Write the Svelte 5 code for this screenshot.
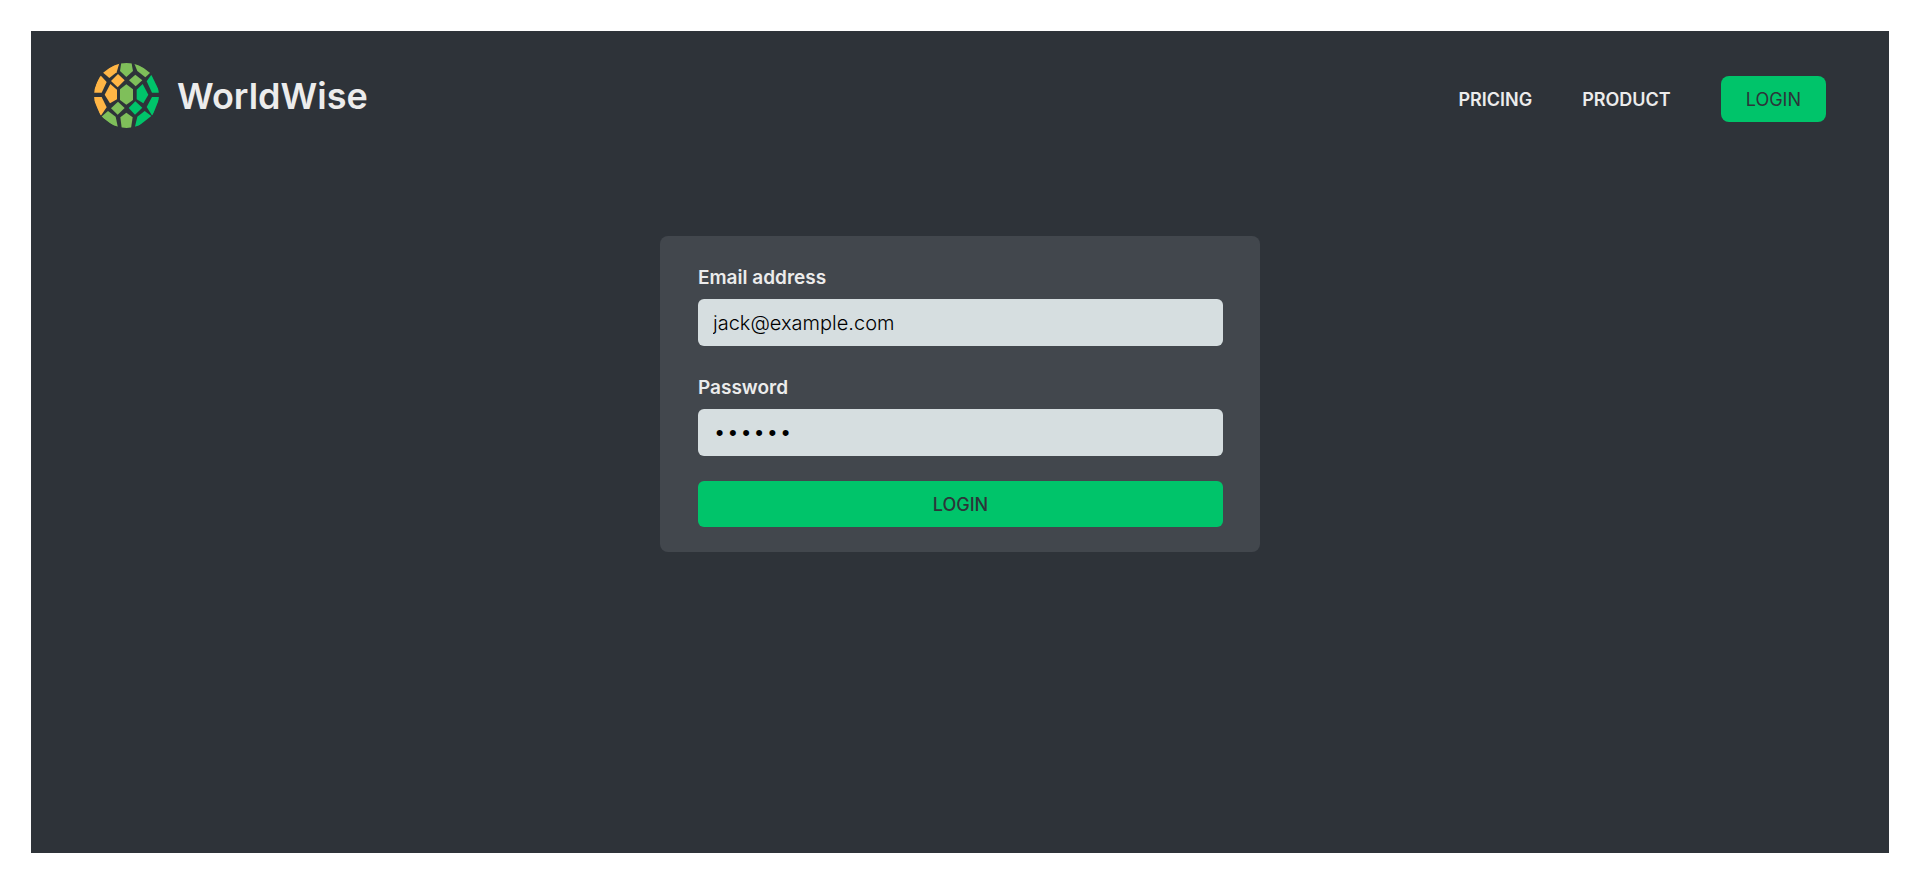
<script>
  let email = $state('jack@example.com');
  let password = $state('qwerty');

  const orange = '#ffb545';
  const lime = '#7fbf5a';
  const green = '#00c46a';

  const facets = [
    [lime, '365,180 393,180 399,213 379,231 360,213'],
    [lime, '361,352 379,338 398,352 392,392 366,392'],
    [lime, '379,253 399,268 399,300 379,314 360,300 360,268'],
    [orange, '359,186 350,217 328,234 306,215'],
    [lime, '401,186 412,213 436,232 454,215'],
    [orange, '354,222 374,241 353,262 333,243'],
    [lime, '406,224 427,241 407,259 387,241'],
    [orange, '300,224 320,246 305,278 278,278'],
    [orange, '278,291 305,291 320,322 302,348'],
    [orange, '331,252 351,269 351,298 330,310 314,284'],
    [green, '454,224 480,278 456,278 440,244'],
    [green, '480,291 456,291 440,321 457,348'],
    [green, '428,252 445,284 430,310 410,298 410,269'],
    [lime, '354,305 374,324 353,344 333,325'],
    [green, '406,304 427,323 405,344 386,324'],
    [lime, '324,333 347,350 355,388 304,350'],
    [green, '434,333 454,348 403,388 412,350']
  ];
</script>

<main>
  <header>
    <a class="logo" href="#home">
      <svg viewBox="282 189 195 195" aria-hidden="true">
        <clipPath id="globe"><circle cx="379.5" cy="286.5" r="97.5" /></clipPath>
        <g clip-path="url(#globe)">
          {#each facets as [fill, points]}
            <polygon {fill} {points} />
          {/each}
        </g>
      </svg>
      <span>WorldWise</span>
    </a>
    <nav>
      <a href="#pricing">PRICING</a>
      <a href="#product">PRODUCT</a>
      <a class="cta" href="#login">LOGIN</a>
    </nav>
  </header>

  <form onsubmit={(e) => e.preventDefault()}>
    <div class="field">
      <label for="email">Email address</label>
      <input id="email" type="email" bind:value={email} />
    </div>
    <div class="field">
      <label for="password">Password</label>
      <input id="password" type="password" bind:value={password} />
    </div>
    <button type="submit">LOGIN</button>
  </form>
</main>

<style>
  :global(body) {
    margin: 0;
    background: #fff;
  }

  main {
    box-sizing: border-box;
    min-height: calc(100vh - 61px);
    margin: 31px 31px 30px;
    padding: 32px 63px;
    background: #2e3339;
    color: #ececec;
    font-family: Inter, sans-serif;
    font-size: 19px;
  }

  header {
    display: flex;
    align-items: center;
    justify-content: space-between;
  }

  a {
    color: inherit;
    text-decoration: none;
  }

  .logo {
    display: flex;
    align-items: center;
    gap: 18px;
    padding-bottom: 7px;
    font-size: 36px;
    font-weight: 600;
  }

  .logo svg {
    width: 65px;
    height: 65px;
  }

  nav {
    display: flex;
    align-items: center;
    gap: 50px;
    font-size: 18px;
    font-weight: 600;
  }

  .cta {
    padding: 2px 25px 0;
    border-radius: 8px;
    background: #00c46a;
    color: #2d3439;
    font-weight: 400;
    line-height: 44px;
  }

  form {
    box-sizing: border-box;
    display: flex;
    flex-direction: column;
    gap: 25px;
    max-width: 600px;
    margin: 101px auto 0;
    padding: 25px 37px 25px 38px;
    border-radius: 8px;
    background: #42474d;
  }

  .field {
    display: flex;
    flex-direction: column;
    gap: 5px;
  }

  label {
    font-weight: 600;
    line-height: 33px;
  }

  input {
    box-sizing: border-box;
    width: 100%;
    height: 47px;
    padding: 0 15px;
    border: none;
    border-radius: 6px;
    outline: none;
    background: #d6dee0;
    color: #000;
    font: 300 20px Inter, sans-serif;
  }

  input[type='password'] {
    padding-top: 4px;
    font: 22px 'Liberation Mono', monospace;
  }

  button {
    height: 46px;
    border: none;
    border-radius: 6px;
    background: #00c46a;
    color: #2d3439;
    font: 500 18px Inter, sans-serif;
    cursor: pointer;
  }
</style>
